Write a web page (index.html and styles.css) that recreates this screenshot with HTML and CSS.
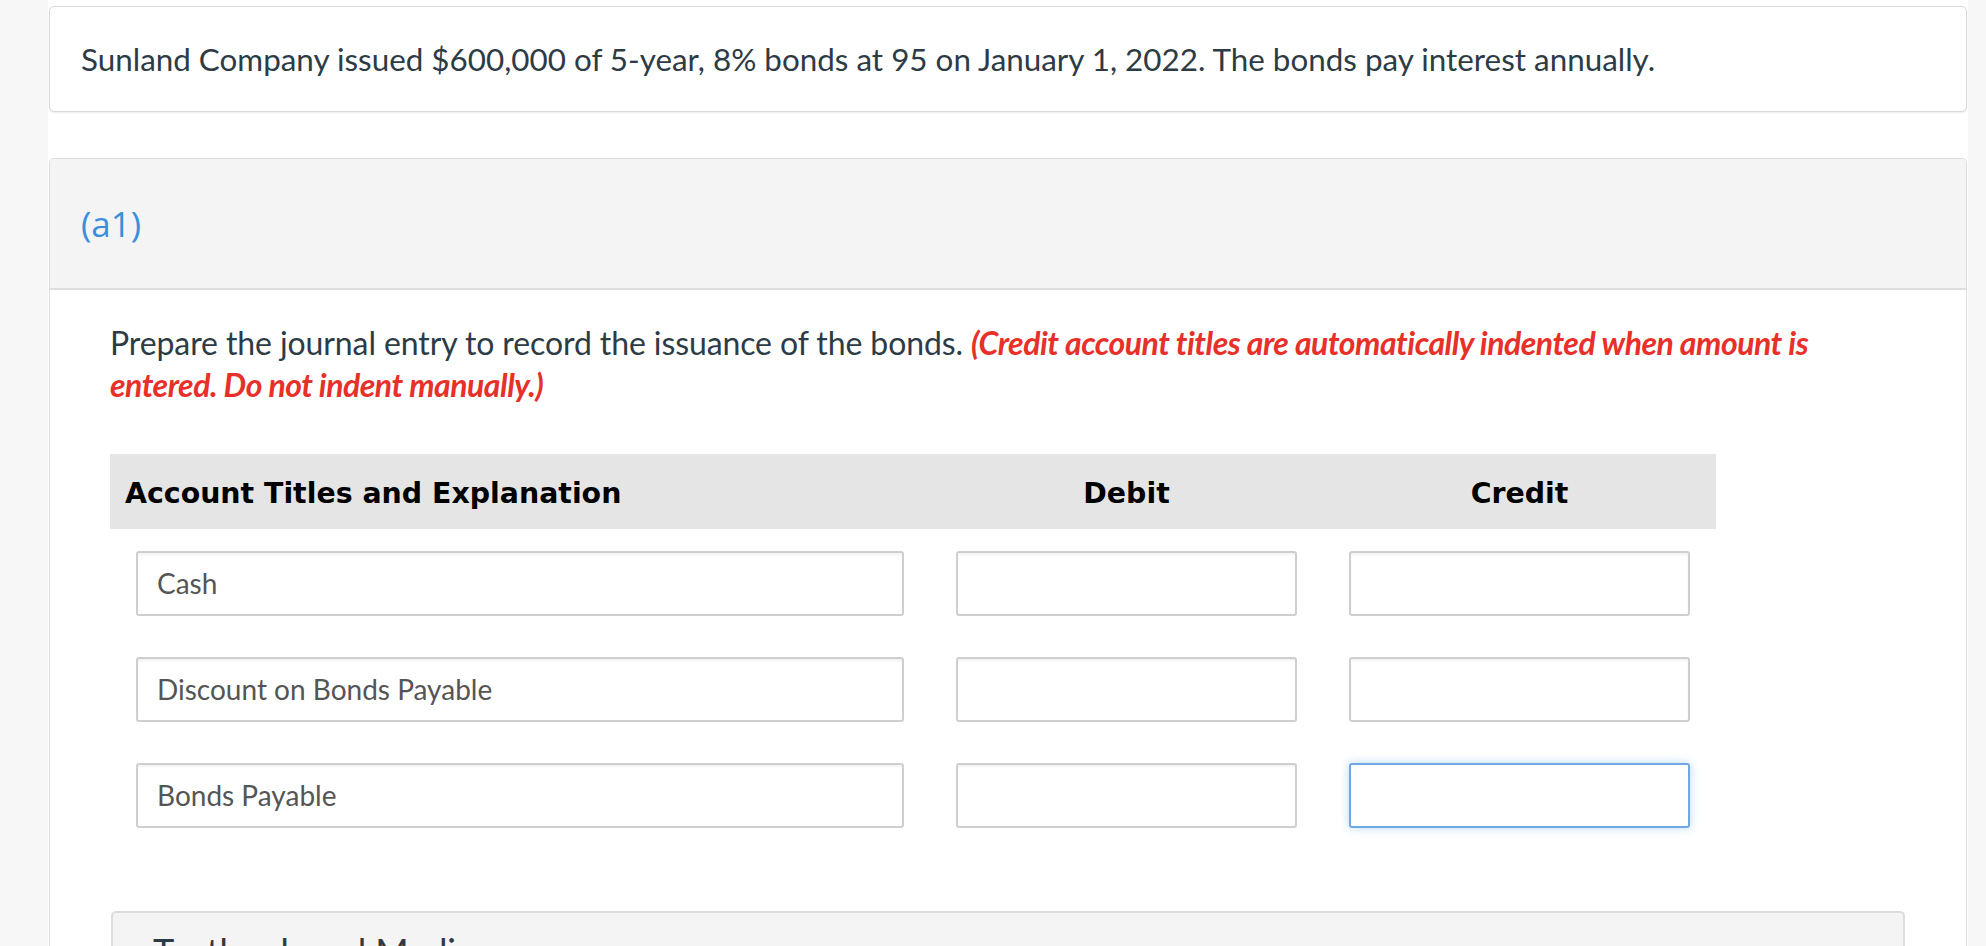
FILE: index.html
```html
<!DOCTYPE html>
<html lang="en">
<head>
<meta charset="utf-8">
<title>Sunland Company bonds</title>
<link rel="stylesheet" href="styles.css">
</head>
<body>
<div class="page">
  <div class="intro-card">
    <p class="intro-text">Sunland Company issued $600,000 of 5-year, 8% bonds at 95 on January 1, 2022. The bonds pay interest annually.</p>
  </div>

  <section class="part">
    <div class="part-head">
      <span class="part-label">(a1)</span>
    </div>
    <div class="part-body">
      <p class="prompt">Prepare the journal entry to record the issuance of the bonds. <em class="note">(Credit account titles are automatically indented when amount is entered. Do not indent manually.)</em></p>

      <div class="journal">
        <div class="jh jh-account">Account Titles and Explanation</div>
        <div class="jh jh-num">Debit</div>
        <div class="jh jh-num">Credit</div>

        <div class="jc"><div class="field">Cash</div></div>
        <div class="jc"><div class="field"></div></div>
        <div class="jc"><div class="field"></div></div>

        <div class="jc"><div class="field">Discount on Bonds Payable</div></div>
        <div class="jc"><div class="field"></div></div>
        <div class="jc"><div class="field"></div></div>

        <div class="jc"><div class="field">Bonds Payable</div></div>
        <div class="jc"><div class="field"></div></div>
        <div class="jc"><div class="field field-focus"></div></div>
      </div>

      <div class="media-panel">
        <span class="media-title">Textbook and Media</span>
      </div>
    </div>
  </section>
</div>
</body>
</html>
```

FILE: styles.css
```css
html, body {
  margin: 0;
  padding: 0;
  height: 100%;
  overflow: hidden;
}

body {
  background: #f7f7f7;
  font-family: "Lato", "Open Sans", sans-serif;
  color: #2d3b45;
}

.page {
  margin-left: 48px;
  width: 1920px;
  min-height: 100%;
  background: #ffffff;
  padding-top: 6px;
  box-sizing: border-box;
}

.intro-card {
  margin: 0 1px;
  border: 1px solid #d9d9d9;
  border-radius: 5px;
  box-shadow: 0 1px 2px rgba(0, 0, 0, 0.08);
  padding: 31px 30px 31px 31px;
  background: #fff;
}

.intro-text {
  margin: 0;
  font-size: 31.4px;
  line-height: 42px;
}

.part {
  margin: 46px 1px 0 1px;
  border: 1px solid #dcdcdc;
  border-bottom: none;
  border-radius: 5px 5px 0 0;
}

.part-head {
  background: #f4f4f4;
  border-bottom: 2px solid #dddddd;
  padding: 44px 31px 43px 31px;
  border-radius: 5px 5px 0 0;
}

.part-label {
  display: block;
  font-family: "Open Sans", "Lato", sans-serif;
  font-size: 35px;
  line-height: 42px;
  color: #3a8edb;
}

.part-body {
  padding: 32px 60px 0 60px;
}

.prompt {
  margin: 0;
  font-size: 32px;
  line-height: 42px;
  letter-spacing: -0.1px;
}

.note {
  font-style: italic;
  font-weight: 700;
  color: #e8302a;
  letter-spacing: -0.5px;
}

.journal {
  margin-top: 48px;
  width: 1606px;
  display: grid;
  grid-template-columns: 820px 393px 393px;
}

.jh {
  background: #e5e5e5;
  font-family: "DejaVu Sans", "Verdana", sans-serif;
  font-weight: 700;
  font-size: 28.4px;
  line-height: 71px;
  padding-top: 4px;
  color: #000;
}

.jh-account {
  padding-left: 15px;
}

.jh-num {
  text-align: center;
}

.jc {
  padding: 22px 26px 19px 26px;
}

.field {
  height: 65px;
  box-sizing: border-box;
  border: 2px solid #cfcfcf;
  border-radius: 3px;
  box-shadow: inset 0 2px 2px rgba(0, 0, 0, 0.05);
  background: #fff;
  font-size: 28px;
  line-height: 61px;
  padding: 0 19px;
  color: #555555;
  white-space: nowrap;
}

.field-focus {
  border-color: #6fa8e3;
  box-shadow: 0 0 10px rgba(102, 170, 235, 0.45);
}

.media-panel {
  margin-top: 64px;
  width: 1794px;
  margin-left: 1px;
  background: #f4f4f4;
  border: 2px solid #dddddd;
  border-bottom: none;
  border-radius: 5px 5px 0 0;
  padding: 17px 40px 40px 40px;
  box-sizing: border-box;
}

.media-title {
  font-size: 36px;
  line-height: 42px;
  color: #2d3b45;
}
```
